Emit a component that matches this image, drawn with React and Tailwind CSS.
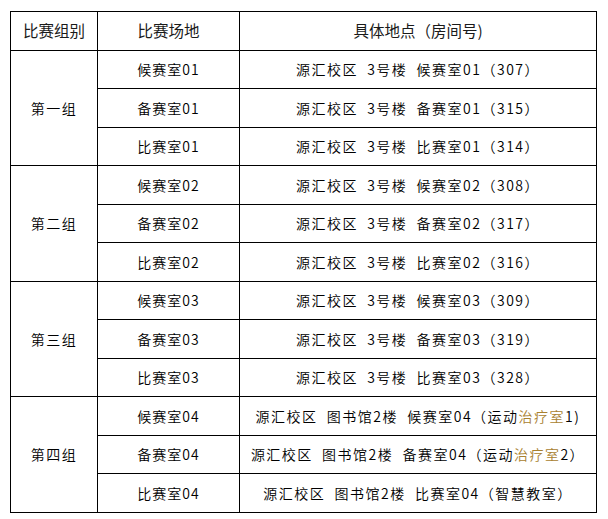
import React from "react";

const groups = [
  {
    name: "第一组",
    rows: [
      { room: "候赛室01", place: [["源汇校区  3号楼  候赛室01（307）"]] },
      { room: "备赛室01", place: [["源汇校区  3号楼  备赛室01（315）"]] },
      { room: "比赛室01", place: [["源汇校区  3号楼  比赛室01（314）"]] },
    ],
  },
  {
    name: "第二组",
    rows: [
      { room: "候赛室02", place: [["源汇校区  3号楼  候赛室02（308）"]] },
      { room: "备赛室02", place: [["源汇校区  3号楼  备赛室02（317）"]] },
      { room: "比赛室02", place: [["源汇校区  3号楼  比赛室02（316）"]] },
    ],
  },
  {
    name: "第三组",
    rows: [
      { room: "候赛室03", place: [["源汇校区  3号楼  候赛室03（309）"]] },
      { room: "备赛室03", place: [["源汇校区  3号楼  备赛室03（319）"]] },
      { room: "比赛室03", place: [["源汇校区  3号楼  比赛室03（328）"]] },
    ],
  },
  {
    name: "第四组",
    rows: [
      { room: "候赛室04", place: [["源汇校区  图书馆2楼  候赛室04（运动"], ["治疗室", true], ["1)"]] },
      { room: "备赛室04", place: [["源汇校区  图书馆2楼  备赛室04（运动"], ["治疗室", true], ["2）"]] },
      { room: "比赛室04", place: [["源汇校区  图书馆2楼  比赛室04（智慧教室）"]] },
    ],
  },
];

const body = "font-['SimSun','Noto_Sans_CJK_SC',serif]";

export default function App() {
  let idx = 0;
  return (
    <div className="w-[608px] h-[519px] bg-white overflow-hidden pt-[11px] pl-[10px]">
      <table className="table-fixed border-collapse w-[586px] text-black">
        <colgroup>
          <col className="w-[87px]" />
          <col className="w-[142px]" />
          <col className="w-[357px]" />
        </colgroup>
        <thead>
          <tr className="h-[39px] text-[15.5px] font-['Noto_Sans_CJK_SC',sans-serif] text-[#1a1a1a]">
            <th className="border border-black font-normal text-center">比赛组别</th>
            <th className="border border-black font-normal text-center">比赛场地</th>
            <th className="border border-black font-normal text-center">具体地点（房间号)</th>
          </tr>
        </thead>
        <tbody className={`${body} text-[14px] font-[350] tracking-[1.5px]`}>
          {groups.map((g) =>
            g.rows.map((r, i) => {
              const h = idx++ % 2 === 0 ? "h-[38px]" : "h-[39px]";
              return (
                <tr key={g.name + i} className={h}>
                  {i === 0 && (
                    <td rowSpan={3} className="border border-black text-center">
                      {g.name}
                    </td>
                  )}
                  <td className="border border-black text-center p-0 tracking-[1px]">{r.room}</td>
                  <td className="border border-black text-center p-0 whitespace-pre">
                    {r.place.map(([t, hl], k) => (
                      <span key={k} className={hl ? "text-[#a9812f]" : ""}>
                        {t}
                      </span>
                    ))}
                  </td>
                </tr>
              );
            })
          )}
        </tbody>
      </table>
    </div>
  );
}
